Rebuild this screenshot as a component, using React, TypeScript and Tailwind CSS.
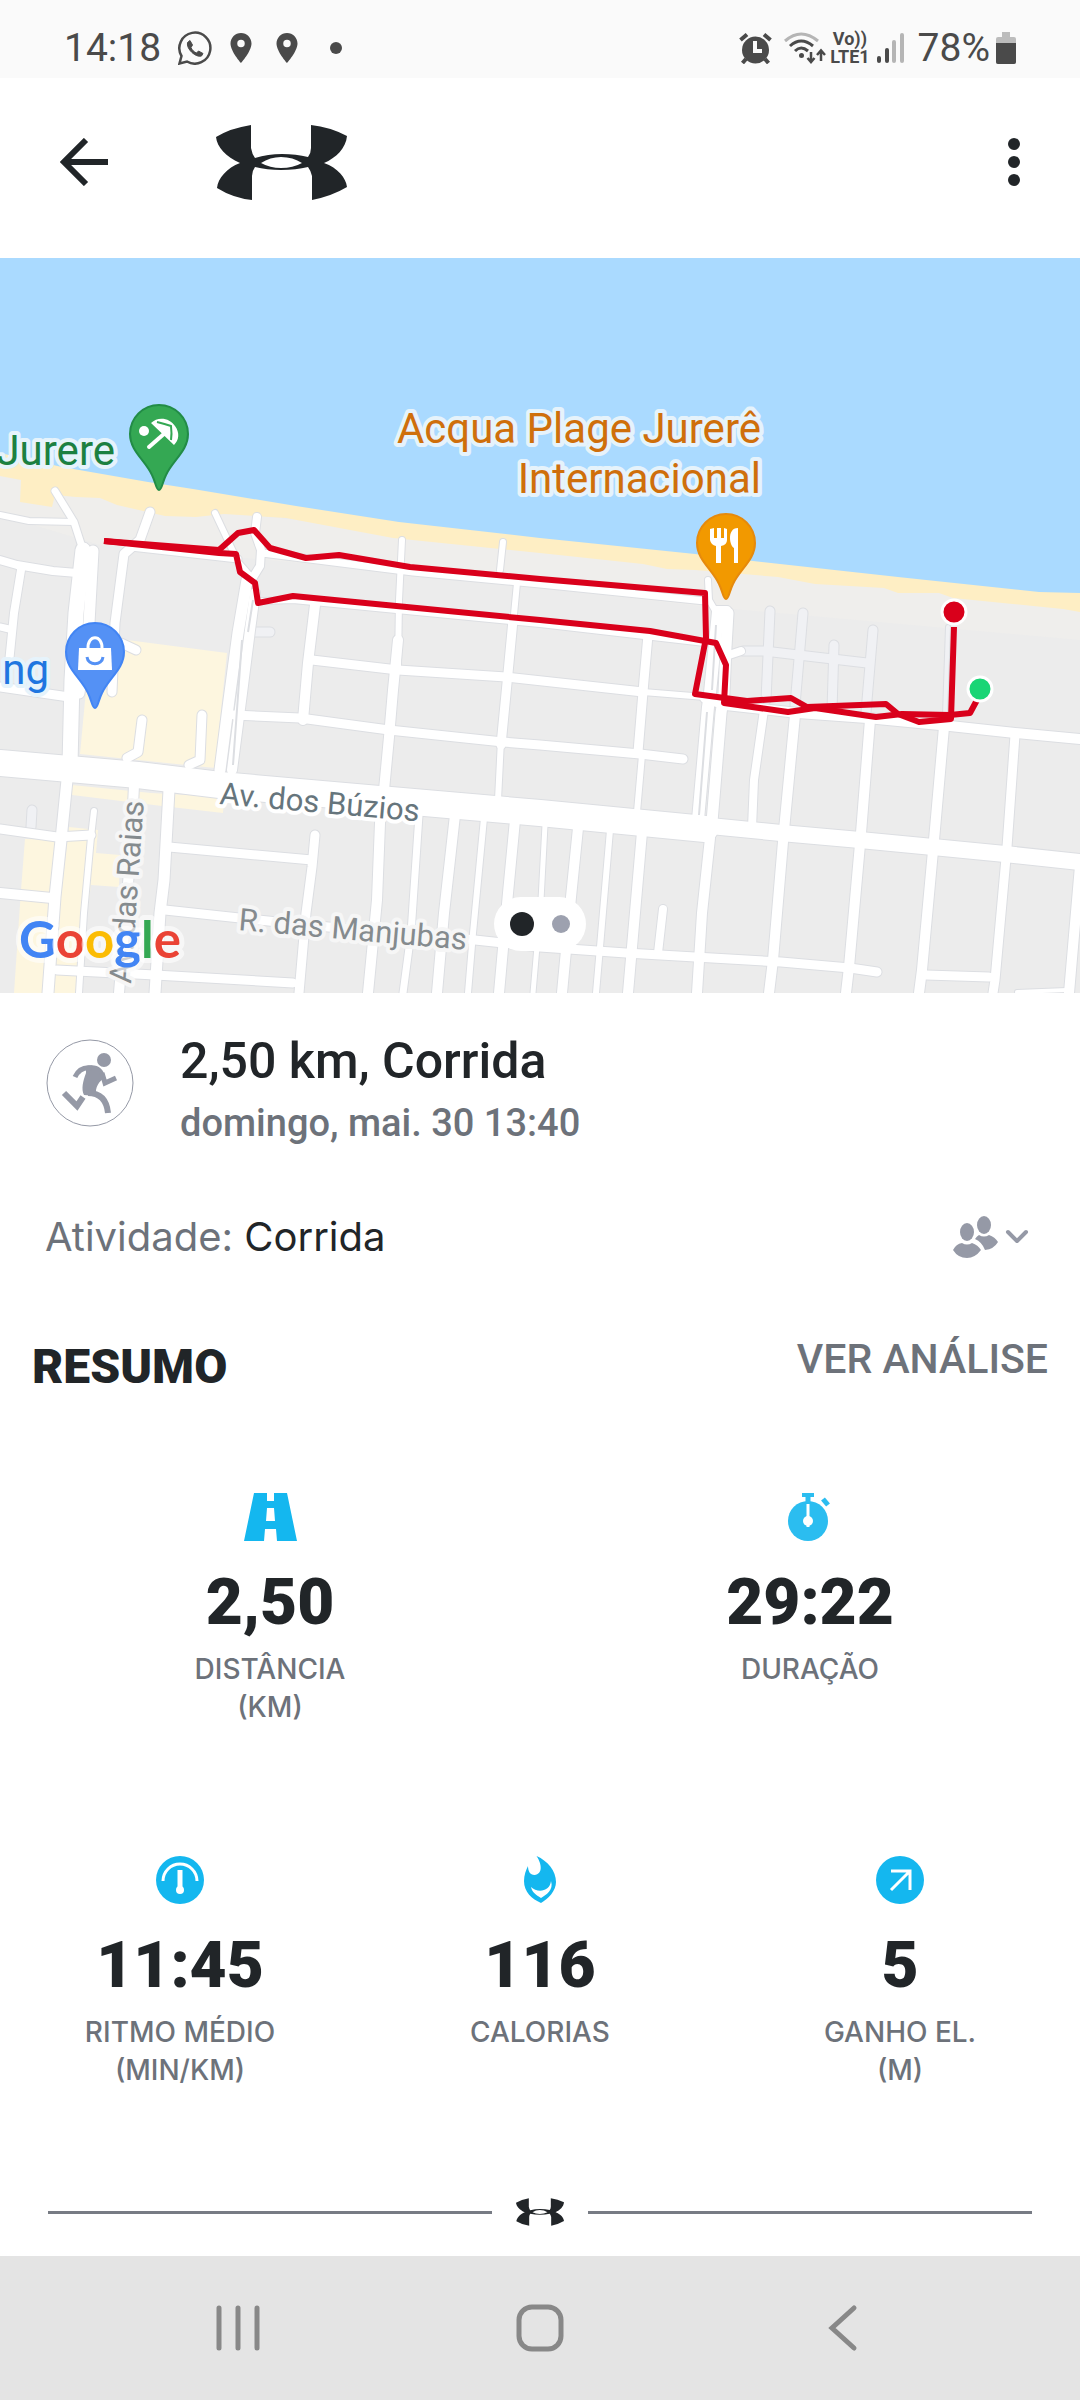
import React from "react";
import { MdPlace } from "react-icons/md";

type Road = { d: string; w: number };

const roads: Road[] = [
  { d: "M55 491L74 522L83 550", w: 7 },
  { d: "M0 515L29 521L74 522", w: 6 },
  { d: "M83 550L76 613L72 680L70 765", w: 15 },
  { d: "M93 551L89 623L79 693", w: 11 },
  { d: "M150 512L140 540L124 554L115 623L112 692", w: 9 },
  { d: "M131 547L238 559", w: 7 },
  { d: "M215 513L238 562L252 578", w: 6 },
  { d: "M257 517L255 533L261 550L260 566L250 582", w: 8 },
  { d: "M262 553L413 572L540 584L705 601", w: 7 },
  { d: "M402 540L399 600L398 667", w: 6 },
  { d: "M398 640L393 690L389 737L384 790L380 823L377 900L368 993", w: 10 },
  { d: "M503 542L500 570", w: 6 },
  { d: "M517 583L513 625", w: 6 },
  { d: "M513 620L508 673L501 745", w: 9 },
  { d: "M501 740L498 800", w: 6 },
  { d: "M262 601L293 600L540 624L705 643", w: 6 },
  { d: "M315 605L308 663L303 720", w: 10 },
  { d: "M312 660L398 670L506 677L643 692", w: 9 },
  { d: "M643 692L705 697", w: 6 },
  { d: "M247 580L238 633L229 700L220 770", w: 11 },
  { d: "M255 593L250 630L242 693L232 770", w: 10 },
  { d: "M0 560L17 565L53 571L77 573", w: 8 },
  { d: "M21 570L14 613L9 663", w: 8 },
  { d: "M0 627L9 629", w: 7 },
  { d: "M0 687L69 697", w: 9 },
  { d: "M121 643L136 650", w: 9 },
  { d: "M234 715L300 718L389 730L503 742L540 745L640 754L683 759", w: 9 },
  { d: "M648 635L644 680L638 752", w: 9 },
  { d: "M642 755L637 812", w: 6 },
  { d: "M708 580L709 600L716 612", w: 6 },
  { d: "M718 612L710 693L708 707L698 820", w: 12 },
  { d: "M728 613L726 647L724 693L721 713L712 822", w: 11 },
  { d: "M718 610L727 610", w: 8 },
  { d: "M729 655L741 651", w: 8 },
  { d: "M710 838L702 913L697 993", w: 10 },
  { d: "M705 698L726 705L798 713L867 718L950 726L1015 733L1080 739", w: 10 },
  { d: "M764 710L754 780L752 828", w: 8 },
  { d: "M795 715L784 830L773 960L769 993", w: 10 },
  { d: "M870 720L861 833L849 967L846 993", w: 10 },
  { d: "M944 727L934 840L922 970L919 993", w: 10 },
  { d: "M1015 735L1007 847L995 980L993 993", w: 9 },
  { d: "M1080 866L1069 993", w: 10 },
  { d: "M926 975L989 977", w: 9 },
  { d: "M1017 992L1067 990", w: 4 },
  { d: "M0 763L138 775L220 785L379 799L540 813L705 829", w: 26 },
  { d: "M700 825L781 833L860 840L933 847L1005 854L1080 862", w: 16 },
  { d: "M142 720L138 752L127 758", w: 9 },
  { d: "M202 715L200 760L189 765", w: 9 },
  { d: "M67 780L61 840L55 897L48 993", w: 11 },
  { d: "M94 811L91 837L84 913L79 993", w: 6 },
  { d: "M134 785L131 847L119 993", w: 10 },
  { d: "M169 790L164 880L160 913L155 993", w: 11 },
  { d: "M315 835L312 867L306 913L299 993", w: 9 },
  { d: "M419 815L411 933L403 993", w: 7 },
  { d: "M455 815L444 913L437 993", w: 10 },
  { d: "M484 818L473 933L468 993", w: 6 },
  { d: "M515 820L508 893L499 993", w: 10 },
  { d: "M545 825L541 900L533 993", w: 5 },
  { d: "M578 828L571 897L562 993", w: 10 },
  { d: "M610 830L600 947L596 993", w: 6 },
  { d: "M642 832L632 947L628 993", w: 10 },
  { d: "M663 909L658 953", w: 8 },
  { d: "M0 829L57 837L91 835", w: 9 },
  { d: "M0 893L52 898", w: 10 },
  { d: "M57 970L155 975L293 983", w: 9 },
  { d: "M169 847L312 860", w: 9 },
  { d: "M165 910L306 925L475 940L540 947L626 953L695 957L781 962L850 968L877 972", w: 9 },
];

const lanes: Road[] = [
  { d: "M255 632L270 632", w: 9 },
  { d: "M32 810L31 827", w: 9 },
  { d: "M770 611L766 700", w: 9 },
  { d: "M803 613L795 705", w: 9 },
  { d: "M834 645L832 710", w: 9 },
  { d: "M873 630L866 712", w: 9 },
  { d: "M743 651L764 651L867 663", w: 9 },
  { d: "M948 627L945 715", w: 4 },
];

const RoadLayer: React.FC<{ items: Road[]; color: string }> = ({ items, color }) => (
  <g fill="none" strokeLinecap="round" strokeLinejoin="round">
    {items.map((road) => (
      <path key={"edge" + road.d} d={road.d} stroke="#dcdee2" strokeWidth={road.w + 2} />
    ))}
    {items.map((road) => (
      <path key={road.d} d={road.d} stroke={color} strokeWidth={road.w} />
    ))}
  </g>
);

const Pin: React.FC<{ x: number; y: number; fill: string; edge: string; children: React.ReactNode }> = ({
  x,
  y,
  fill,
  edge,
  children,
}) => (
  <g transform={`translate(${x} ${y})`}>
    <path
      d="M0 56C-3 56-3 49-7 41C-14 26-29 17-29 0A29 29 0 0 1 29 0C29 17 14 26 7 41C3 49 3 56 0 56Z"
      fill={fill}
      stroke={edge}
      strokeWidth="2"
    />
    {children}
  </g>
);

const RouteMap = () => (
  <svg
    viewBox="0 258 1080 735"
    className="block w-full h-auto font-[Roboto,sans-serif]"
    role="img"
    aria-label="Mapa do percurso"
  >
    <rect x="0" y="258" width="1080" height="735" fill="#ececec" />
    <path d="M0 470L200 510L540 545L1080 600L1080 640L700 606L400 572L100 545L0 515Z" fill="#efeeec" />
    <path
      d="M0 440L0 476L21 480L20 502L52 507L55 495L76 497L100 498L117 505L165 516L196 517L224 514L286 518L393 538L540 553L643 564L667 569L695 570L778 577L815 584L884 588L898 593L939 593L953 598L1063 609L1080 612L1080 580Z"
      fill="#feeec4"
    />
    <path
      d="M0 258L1080 258L1080 593L1039 592L898 577L753 561L695 554L540 538L399 522L296 506L193 489L148 482L62 467L0 453Z"
      fill="#aadaff"
    />
    <g fill="#fdf6df">
      <path d="M127 640L227 653L215 768L80 754L86 690L112 690Z" />
      <path d="M72 785L151 793L224 797L223 813L162 806L72 795Z" />
      <path d="M69 827L98 830L96 853L120 855L119 887L91 885L76 993L50 993Z" />
      <path d="M25 839L58 840L45 993L14 993L21 890Z" />
    </g>
    <RoadLayer items={lanes} color="#f0f1f4" />
    <RoadLayer items={roads} color="#ffffff" />
    <path d="M242 640L233 765M253 600L248 632M716 625L712 690M707 712L699 815" fill="none" stroke="#dcdee2" strokeWidth="2" />

    <g fontSize="31" fill="#858b8e" stroke="#f6f6f6" strokeWidth="8" strokeLinejoin="round" paintOrder="stroke">
      <text transform="translate(219 804) rotate(5)" fill="#66757c" stroke="#fff">
        Av. dos Búzios
      </text>
      <text transform="translate(238 930) rotate(5)">R. das Manjubas</text>
      <text transform="translate(131 984) rotate(-86)">Av. das Raias</text>
    </g>

    <g fill="none" stroke="#d9001b" strokeWidth="6" strokeLinejoin="round">
      <path d="M104 541L219 550L238 533L254 530L270 548L306 558L339 555L410 567L540 579L705 593L706 638L695 694L747 701L791 698L807 707L886 704L898 714L919 722L951 719L954 627" />
      <path d="M104 541L219 553L236 554L240 572L255 583L258 603L293 596L540 620L650 631L705 641L716 643L726 665L724 703L788 712L815 708L876 717L902 714L950 715L970 713L977 700" />
    </g>
    <circle cx="954" cy="612" r="12" fill="#d9001b" stroke="#fff" strokeWidth="3" />
    <circle cx="980" cy="689" r="12" fill="#19d575" stroke="#fff" strokeWidth="3" />

    <Pin x={159} y={434} fill="#34a853" edge="#228c46">
      <circle cx="-15" cy="-3" r="5" fill="#fff" />
      <path d="M-8-11C-1-18 11-16 16-8C21-1 20 6 15 11Z" fill="#fff" />
      <path d="M6-1L-10 13" stroke="#fff" strokeWidth="4" strokeLinecap="round" />
      <path d="M-2-12Q6-10 12-8Q13 0 12 6" fill="none" stroke="#34a853" strokeWidth="2" />
    </Pin>
    <Pin x={95} y={652} fill="#5491f5" edge="#4285f4">
      <path d="M-16-4H16L17 18H-17Z" fill="#fff" />
      <path d="M-7-3C-8-18 8-18 7-3" fill="none" stroke="#fff" strokeWidth="3" />
      <path d="M-8 5C-7 14 7 14 8 5" fill="none" stroke="#5491f5" strokeWidth="3" />
    </Pin>
    <Pin x={726} y={543} fill="#f29900" edge="#e68a0c">
      <path d="M-16-14V-3Q-15 2-10 3V20H-5V3Q1 2 1-3V-14L-2-15V-5H-5V-15H-9V-5H-12V-15Z" fill="#fff" />
      <path d="M12-15C6-15 4-10 4-5C4 0 6 4 8 5V20H12Z" fill="#fff" />
    </Pin>

    <g fontSize="42" stroke="#e6f3fb" strokeWidth="8" strokeLinejoin="round" paintOrder="stroke">
      <text x="115" y="465" textAnchor="end" fill="#1c8041">
        Jurere
      </text>
      <text x="49" y="684" textAnchor="end" fill="#1f76e0">
        ng
      </text>
      <text x="761" y="443" textAnchor="end" fill="#cf6f0b">
        Acqua Plage Jurerê
      </text>
      <text x="761" y="493" textAnchor="end" fill="#cf6f0b">
        Internacional
      </text>
    </g>

    <text
      x="19"
      y="958"
      fontSize="51"
      fontWeight="700"
      stroke="#ffffff"
      strokeOpacity="0.6"
      strokeWidth="10"
      strokeLinejoin="round"
      paintOrder="stroke"
      className="font-[Lato,sans-serif]"
    >
      <tspan fill="#4285f4">G</tspan>
      <tspan fill="#ea4335">o</tspan>
      <tspan fill="#fbbc04">o</tspan>
      <tspan fill="#4285f4">g</tspan>
      <tspan fill="#34a853">l</tspan>
      <tspan fill="#ea4335">e</tspan>
    </text>
  </svg>
);

const Logo: React.FC<{ className: string }> = ({ className }) => (
  <svg viewBox="216 124 131 75" className={className} fill="#212528" fillRule="evenodd" aria-hidden="true">
    <path d="M216 136Q231 127 251 124V147Q252 153 255 157Q268 153 282 153Q296 153 308 156Q311 152 311 147V124Q330 126 347 135C346 147 336 157 324 162C338 167 346 177 347 186Q332 195 312 199V175Q311 170 308 166Q296 169 281 169Q267 169 255 166Q252 170 252 175V199Q233 197 217 187C218 177 227 167 240 162C226 156 217 146 216 136ZM261 162Q270 167 281 167Q293 167 302 162Q293 156 281 156Q270 156 261 162Z" />
  </svg>
);

const StatusBar = () => (
  <div className="flex h-[78px] items-center justify-between bg-[#fafafa] pt-[18px] pl-16 pr-16 text-[39px] leading-none text-[#4a4a4a]">
    <div className="flex items-center">
      <span>14:18</span>
      <svg viewBox="0 0 34 34" className="ml-[17px] size-[34px]" fill="none" stroke="currentColor" strokeWidth="2.5">
        <path d="M3.500 25A15.500 15.500 0 1 1 9 30.500L1.500 32.500Z" />
        <path
          d="M9.500 11.500L12 9.500L14.500 14L13 16.500C14 19 16 21 18.500 22L20.500 20L25 22.500L23.500 25C18 27 8 18 9.500 11.500Z"
          fill="currentColor"
          strokeWidth="1"
          strokeLinejoin="round"
        />
      </svg>
      <MdPlace className="ml-[11px] size-9" />
      <MdPlace className="ml-[10px] size-9" />
      <span className="ml-[25px] size-3 rounded-full bg-[#4a4a4a]" />
    </div>
    <div className="flex items-center">
      <svg viewBox="0 0 33 31" className="h-[31px] w-[33px]" fill="none" stroke="currentColor" strokeWidth="4">
        <circle cx="16.500" cy="17" r="13.500" fill="currentColor" stroke="none" />
        <path d="M1.500 7L8 1.500M31.500 7L25 1.500M7 26L3.500 30M26 26L29.500 30" />
        <path d="M16 8V18H23" stroke="#fafafa" />
      </svg>
      <svg viewBox="0 0 42 33" className="ml-3 h-[33px] w-[42px]" fill="none" stroke="currentColor" strokeWidth="3">
        <path d="M1 9Q17-5 34 9" stroke="#b5b5b5" />
        <path d="M6 14Q17 4 29 14M11 19Q17 13 24 19" />
        <circle cx="17.500" cy="23.500" r="2.500" fill="currentColor" stroke="none" />
        <path d="M27 20V30M23.500 26L27 30L30.500 26M37 29V19M33 23L37 18.500L41 23" strokeWidth="2.500" />
      </svg>
      <span className="ml-1 flex flex-col items-center text-[18px] font-bold leading-[18px]">
        <span>Vo))</span>
        <span>LTE1</span>
      </span>
      <svg viewBox="0 0 27 31" className="ml-[7px] h-[31px] w-[27px]" fill="currentColor">
        <rect x="0" y="23" width="4" height="7" rx="2" />
        <rect x="8" y="15" width="4" height="15" rx="2" />
        <rect x="15" y="7" width="4" height="23" rx="2" fill="#b5b5b5" />
        <rect x="23" y="0" width="4" height="30" rx="2" fill="#b5b5b5" />
      </svg>
      <span className="ml-[14px]">78%</span>
      <svg viewBox="0 0 20 32" className="ml-[6px] h-8 w-5">
        <path d="M6 0H14V5H18Q20 5 20 7V30Q20 32 18 32H2Q0 32 0 30V7Q0 5 2 5H6Z" fill="#bcbcbc" />
        <path d="M0 11H20V30Q20 32 18 32H2Q0 32 0 30Z" fill="#4a4a4a" />
      </svg>
    </div>
  </div>
);

const RunnerIcon = () => (
  <svg viewBox="0 0 88 88" className="size-[88px] shrink-0" fill="none" stroke="#9599a6" aria-hidden="true">
    <circle cx="44" cy="44" r="43" strokeWidth="1" />
    <circle cx="58" cy="21" r="7" fill="#9599a6" stroke="none" />
    <path d="M40 27C50 24 58 29 59 38C53 43 49 47 50 57L38 56C35 50 37 42 40 34Z" fill="#9599a6" stroke="none" />
    <path d="M29 38Q34 27 46 29" strokeWidth="5" />
    <path d="M56 34L59 44L70 39" strokeWidth="5" />
    <path d="M18 54L31 67L37 58" strokeWidth="6" />
    <path d="M42 54Q60 54 62 74" strokeWidth="6" />
  </svg>
);

const RoadIcon = () => (
  <svg viewBox="0 0 53 48" className="h-12 w-[53px]" fill="#14b7ef" fillRule="evenodd">
    <path d="M10 0H23V8H30V0H43L53 48H33L32 36H21L20 48H0ZM23 15L22 28H31L30 15Z" />
  </svg>
);

const StopwatchIcon = () => (
  <svg viewBox="0 0 48 48" className="size-12" fill="none" stroke="#2bbdf0">
    <circle cx="22" cy="28" r="20" fill="#2bbdf0" stroke="none" />
    <path d="M16 2H28" strokeWidth="4" />
    <path d="M22 3V10" strokeWidth="5" />
    <path d="M37 6L42 12" strokeWidth="5" />
    <path d="M22 11V34" stroke="#fff" strokeWidth="3" />
    <circle cx="22" cy="28" r="5" fill="#fff" stroke="none" />
  </svg>
);

const PaceIcon = () => (
  <svg viewBox="0 0 48 48" className="size-12" fill="none" stroke="#fff">
    <circle cx="24" cy="24" r="24" fill="#14b7ef" stroke="none" />
    <path d="M7 25A17 17 0 0 1 41 25" strokeWidth="3" />
    <path d="M24 14V34" strokeWidth="5" />
    <circle cx="24" cy="34" r="4" fill="#fff" stroke="none" />
  </svg>
);

const FlameIcon = () => (
  <svg viewBox="0 0 32 48" className="h-12 w-8">
    <path
      d="M12.500 0C24 5 32 15 32 26C32 35 24 43 17 47C8 43 0 36 0 25C0 19 2 14 4 10C4 15 6 19 10.500 19C19 18 18 8 12.500 0Z"
      fill="#14b7ef"
    />
    <path d="M7 31C13 37 26 36 27 25C30 34 22 39 17 42C12 39 8 36 7 31Z" fill="#fff" />
  </svg>
);

const ElevationIcon = () => (
  <svg viewBox="0 0 48 48" className="size-12" fill="none" stroke="#fff" strokeWidth="3">
    <circle cx="24" cy="24" r="24" fill="#14b7ef" stroke="none" />
    <path d="M15 15H34V34M34 15L15 34" />
  </svg>
);

type StatProps = { icon: React.ReactNode; value: string; label: string; unit?: string };

const Stat: React.FC<StatProps> = ({ icon, value, label, unit }) => (
  <div className="flex flex-col items-center text-center">
    {icon}
    <p className="mt-[22px] text-[64px] leading-[80px] font-black text-[#212528]">{value}</p>
    <p className="mt-[7px] font-[Inter,sans-serif] text-[28px] leading-[38px] font-medium text-[#6d727a]">
      {label}
      {unit && <span className="block">{unit}</span>}
    </p>
  </div>
);

const App: React.FC<{}> = () => {
  return (
    <div className="flex min-h-screen flex-col bg-white font-[Roboto,sans-serif] text-[#212528]">
      <StatusBar />
      <header className="flex h-[180px] items-center justify-between pt-1 pr-14 pb-4 pl-[60px]">
        <div className="flex items-center">
          <button type="button" aria-label="Voltar">
            <svg viewBox="0 0 48 48" className="size-12" fill="none" stroke="#212528" strokeWidth="6">
              <path d="M48 24H5M26 2L4 24L26 46" />
            </svg>
          </button>
          <Logo className="ml-[108px] h-[75px] w-[131px]" />
        </div>
        <button type="button" aria-label="Mais opções" className="flex w-5 flex-col items-center gap-[6px]">
          <span className="size-3 rounded-full bg-[#212528]" />
          <span className="size-3 rounded-full bg-[#212528]" />
          <span className="size-3 rounded-full bg-[#212528]" />
        </button>
      </header>

      <section className="relative">
        <RouteMap />
        <div className="absolute bottom-[42px] left-1/2 flex h-[54px] w-[92px] -translate-x-1/2 items-center justify-center gap-[18px] rounded-full bg-white">
          <span className="size-6 rounded-full bg-[#212528]" />
          <span className="size-[18px] rounded-full bg-[#9da1af]" />
        </div>
      </section>

      <main className="flex-1">
        <div className="flex items-start px-[46px] pt-9">
          <div className="pt-[10px]">
            <RunnerIcon />
          </div>
          <div className="ml-[46px]">
            <h1 className="text-[50px] leading-[64px] font-medium">2,50 km, Corrida</h1>
            <p className="text-[38px] leading-[60px] font-medium text-[#6d727a]">domingo, mai. 30 13:40</p>
          </div>
        </div>

        <div className="mt-[54px] flex items-center justify-between pr-[51px] pl-[45px]">
          <p className="font-[Inter,sans-serif] text-[40px] leading-[60px]">
            <span className="text-[#6d727a]">Atividade:</span> Corrida
          </p>
          <button type="button" aria-label="Privacidade" className="flex items-center gap-[6px]">
            <svg viewBox="0 0 46 44" className="h-11 w-[46px]" fill="#9599a6">
              <ellipse cx="14" cy="17" rx="7" ry="9" />
              <ellipse cx="31" cy="10" rx="7" ry="9" />
              <path d="M0 35Q3 29 9 28Q14 31 19 28Q25 30 28 35Q22 43 14 43Q5 43 0 35Z" />
              <path d="M22 24Q24 21 26 20Q31 23 36 20Q42 22 45 27Q41 34 32 35Q29 27 22 24Z" />
            </svg>
            <svg viewBox="0 0 24 16" className="h-4 w-6" fill="none" stroke="#9599a6" strokeWidth="4">
              <path d="M3 3L12 12L21 3" strokeLinecap="round" strokeLinejoin="round" />
            </svg>
          </button>
        </div>

        <div className="mt-[64px] flex items-start justify-between px-8">
          <h2 className="pt-2 text-[48px] leading-[56px] font-black">RESUMO</h2>
          <a href="#analise" className="text-[41px] leading-[56px] font-medium text-[#6d727a]">
            VER ANÁLISE
          </a>
        </div>

        <div className="mt-[98px] grid grid-cols-2">
          <Stat icon={<RoadIcon />} value="2,50" label="DISTÂNCIA" unit="(KM)" />
          <Stat icon={<StopwatchIcon />} value="29:22" label="DURAÇÃO" />
        </div>
        <div className="mt-[130px] grid grid-cols-3">
          <Stat icon={<PaceIcon />} value="11:45" label="RITMO MÉDIO" unit="(MIN/KM)" />
          <Stat icon={<FlameIcon />} value="116" label="CALORIAS" />
          <Stat icon={<ElevationIcon />} value="5" label="GANHO EL." unit="(M)" />
        </div>

        <div className="mt-[109px] mb-[28px] flex items-center gap-6 px-12">
          <span className="h-[3px] flex-1 bg-[#777b84]" />
          <Logo className="h-7 w-12" />
          <span className="h-[3px] flex-1 bg-[#777b84]" />
        </div>
      </main>

      <nav className="flex h-[144px] items-center justify-center gap-[254px] bg-[#e4e4e4]">
        <button type="button" aria-label="Recentes">
          <svg viewBox="0 0 48 48" className="size-12" fill="none" stroke="#888" strokeWidth="5" strokeLinecap="round">
            <path d="M5 4V44M24 4V44M43 4V44" />
          </svg>
        </button>
        <button type="button" aria-label="Início">
          <svg viewBox="0 0 48 48" className="size-12" fill="none" stroke="#888" strokeWidth="5">
            <rect x="3" y="3" width="42" height="42" rx="13" />
          </svg>
        </button>
        <button type="button" aria-label="Voltar">
          <svg viewBox="0 0 48 48" className="size-12" fill="none" stroke="#888" strokeWidth="5" strokeLinecap="round">
            <path d="M36 4L14 24L36 44" />
          </svg>
        </button>
      </nav>
    </div>
  );
};

export default App;
